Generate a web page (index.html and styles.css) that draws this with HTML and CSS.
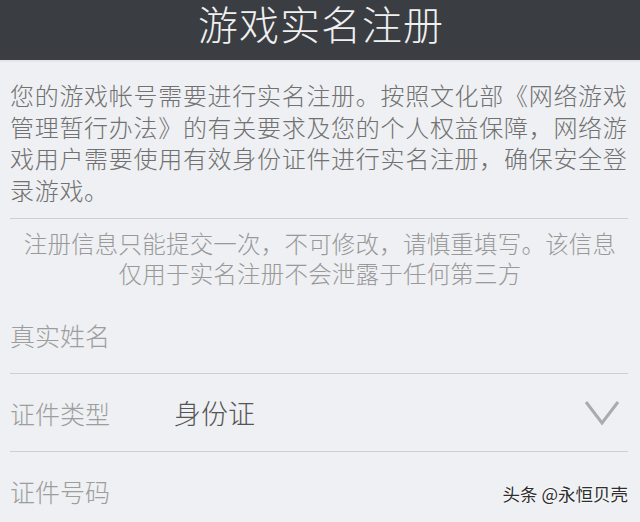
FILE: index.html
```html
<!DOCTYPE html>
<html lang="zh-CN">
<head>
    <meta charset="UTF-8">
    <meta name="viewport" content="width=device-width, initial-scale=1.0">
    <title>游戏实名注册</title>
    <link rel="stylesheet" href="styles.css">
</head>
<body>
    <div id="page">
        <div id="titleBar">
            <h1>游戏实名注册</h1>
        </div>

        <p class="intro">您的游戏帐号需要进行实名注册。按照文化部《网络游戏管理暂行办法》的有关要求及您的个人权益保障，网络游戏用户需要使用有效身份证件进行实名注册，确保安全登录游戏。</p>

        <div class="divider"></div>

        <p class="notice">注册信息只能提交一次，不可修改，请慎重填写。该信息仅用于实名注册不会泄露于任何第三方</p>

        <div id="form">
            <div class="field-row">
                <span class="field-label">真实姓名</span>
            </div>
            <div class="field-row">
                <span class="field-label">证件类型</span>
                <span class="field-value">身份证</span>
                <svg class="chevron" width="36" height="26" viewBox="0 0 36 26">
                    <polyline points="2,2 18,23 34,2" fill="none" stroke="#a9abad" stroke-width="3"/>
                </svg>
            </div>
            <div class="field-row last">
                <span class="field-label">证件号码</span>
            </div>
        </div>

        <!-- watermark over the screenshot -->
        <div class="watermark">头条 @永恒贝壳</div>
    </div>
</body>
</html>
```

FILE: styles.css
```css
* {
    margin: 0;
    padding: 0;
    box-sizing: border-box;
}

body {
    background-color: #eef0f3;
    font-family: "Noto Sans CJK SC", "Noto Sans", sans-serif;
    font-weight: 300;
    overflow: hidden;
    height: 100vh;
    width: 100vw;
}

#page {
    position: relative;
    height: 100vh;
}

#titleBar {
    height: 62px;
    background: #3a3e43;
    border-bottom: 2px solid #e3e5e8;
    text-align: center;
    padding-top: 2px;
}

#titleBar h1 {
    color: #f0f0f0;
    font-size: 40px;
    font-weight: 300;
    line-height: 42px;
    letter-spacing: 1px;
    padding-left: 2px;
}

.intro {
    padding: 17px 10px 0 10px;
    font-size: 24px;
    letter-spacing: 0.7px;
    line-height: 31.5px;
    color: #717171;
}

.divider {
    height: 1px;
    background: #cdcfd2;
    margin: 13px 12px 0 10px;
}

.notice {
    padding: 9px 22px 0 22px;
    font-size: 23.5px;
    letter-spacing: 0.2px;
    line-height: 30px;
    text-align: center;
    color: #999;
}

#form {
    margin-top: 8px;
}

.field-row {
    display: flex;
    align-items: center;
    height: 78px;
    margin: 0 12px 0 10px;
    border-bottom: 1px solid #cdcfd2;
}

.field-row.last {
    border-bottom: none;
}

.field-label {
    width: 164px;
    font-size: 25px;
    color: #9d9d9d;
}

.field-value {
    flex: 1;
    font-size: 27px;
    color: #555;
}

.chevron {
    margin-right: 8px;
}

.watermark {
    position: absolute;
    right: 12px;
    bottom: 16px;
    font-size: 17.5px;
    font-weight: 400;
    color: #2e2e2e;
    text-shadow: 0 0 2px #fff, 0 0 2px #fff;
}
```
